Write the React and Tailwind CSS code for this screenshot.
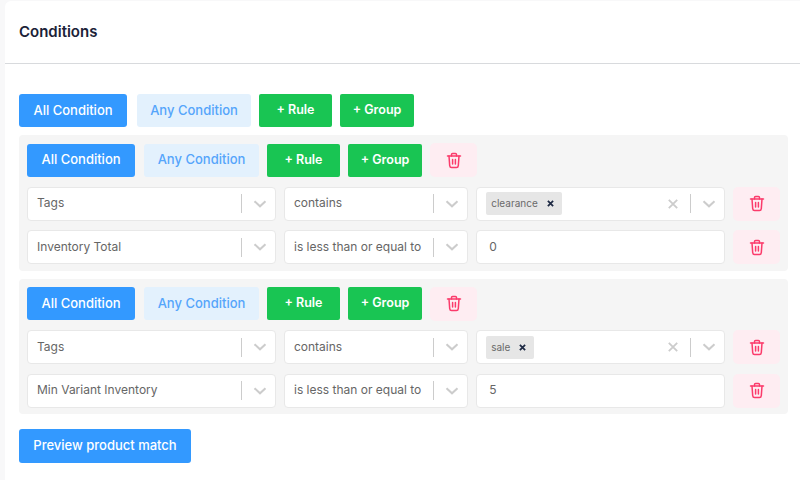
const Trash = () => (
  <svg width="16" height="17" viewBox="0 0 16 17" fill="none" stroke="#fb3b6b" strokeWidth="1.5" strokeLinecap="round" strokeLinejoin="round">
    <path d="M1.5 4h13" />
    <path d="M5.5 4V2.6c0-.6.5-1.1 1.1-1.1h2.8c.6 0 1.1.5 1.1 1.1V4" />
    <path d="M3 4l.7 9.6c.1.9.8 1.9 1.8 1.9h5c1 0 1.7-1 1.8-1.9L13 4" />
    <path d="M6.6 7.5v4.5M9.4 7.5v4.5" />
  </svg>
);

const Chevron = () => (
  <svg width="14" height="8" viewBox="0 0 14 8" fill="none" stroke="#cccccc" strokeWidth="2">
    <path d="M1.5 1.2 7 6.3l5.5-5.1" />
  </svg>
);

function ActionButtons({ nested }) {
  const height = nested ? "h-[33px]" : "h-[33.5px]";
  return (
    <div className="flex items-center">
      <button className={`${height} w-[108px] rounded-[3px] bg-[#3399ff] text-[13px] font-medium text-white ${nested ? "mr-[9px]" : "mr-[10px]"}`}>
        All Condition
      </button>
      <button className={`${height} mr-2 rounded-[3px] bg-[#e3f1fd] text-[13px] font-medium text-[#55a5fb] ${nested ? "w-[115px]" : "w-[114px]"}`}>
        Any Condition
      </button>
      <button className={`${height} mr-2 w-[73px] rounded-[2px] bg-[#19c553] text-[12.5px] font-semibold text-white`}>+ Rule</button>
      <button className={`${height} w-[74px] rounded-[2px] bg-[#19c553] text-[12.5px] font-semibold text-white`}>+ Group</button>
      {nested && <DeleteButton className="ml-2 h-[34px]" />}
    </div>
  );
}

function DeleteButton({ className }) {
  return (
    <button className={`flex w-[47px] items-center justify-center rounded-[5px] bg-[#feedf2] ${className}`}>
      <Trash />
    </button>
  );
}

function Select({ label, width, tag }) {
  return (
    <div className={`flex h-[34px] items-center rounded-[4px] border border-[#e8e8e8] bg-white pl-[9px] text-[12px] text-[#666666] ${width}`}>
      {tag ? (
        <span className="flex h-[23px] items-center rounded-[2px] bg-[#e6e6e6] pl-[5px] text-[10px] text-[#6a6a6a]">
          {tag}
          <span className="ml-[9px] mr-2 text-[#1e2a44]">
            <svg width="7" height="7" viewBox="0 0 8 8" fill="none" stroke="currentColor" strokeWidth="2"><path d="M1 1l6 6M7 1 1 7" /></svg>
          </span>
        </span>
      ) : (
        <span className="whitespace-nowrap pb-px">{label}</span>
      )}
      <span className="ml-auto flex items-center">
        {tag && (
          <svg className="mr-3" width="10" height="10" viewBox="0 0 10 10" fill="none" stroke="#cccccc" strokeWidth="1.8"><path d="M.8.8l8.4 8.4M9.2.8.8 9.2" /></svg>
        )}
        <span className="h-[19px] w-px bg-[#cccccc]" />
        <span className="ml-[11px] mr-2 flex"><Chevron /></span>
      </span>
    </div>
  );
}

function Rule({ field, op, tag, value }) {
  return (
    <div className="flex items-center gap-2">
      <Select label={field} width="w-[250px]" />
      <Select label={op} width="w-[185px]" />
      {tag ? (
        <Select tag={tag} width="w-[250px]" />
      ) : (
        <div className="flex h-[34px] w-[250px] items-center rounded-[4px] border border-[#e8e8e8] bg-white pb-px pl-3 text-[12px] text-[#666666]">{value}</div>
      )}
      <DeleteButton className="h-[34px]" />
    </div>
  );
}

function Group({ field, tag, value }) {
  return (
    <div className="mt-2 flex h-[135.5px] w-[769px] flex-col gap-[9.5px] rounded-[4px] bg-[#f5f5f5] px-2 pt-2">
      <ActionButtons nested />
      <Rule field="Tags" op="contains" tag={tag} />
      <Rule field={field} op="is less than or equal to" value={value} />
    </div>
  );
}

export default function App() {
  return (
    <div className="h-[480px] w-[800px] overflow-hidden bg-[#f8f8f9] pl-[5px] pt-px font-['Inter',sans-serif]">
      <div className="h-[479px] rounded-tl-[6px] bg-white">
        <div className="flex h-[63px] items-center border-b border-[#d8dadd] pl-[14px]">
          <h2 className="pt-px text-[15px] font-semibold text-[#1b2238]">Conditions</h2>
        </div>
        <div className="pl-[14px] pt-[29.5px]">
          <ActionButtons />
          <Group field="Inventory Total" tag="clearance" value="0" />
          <Group field="Min Variant Inventory" tag="sale" value="5" />
          <button className="mt-[15px] h-[34px] w-[172px] rounded-[3px] bg-[#3399ff] text-[13px] font-medium text-white">
            Preview product match
          </button>
        </div>
      </div>
    </div>
  );
}
